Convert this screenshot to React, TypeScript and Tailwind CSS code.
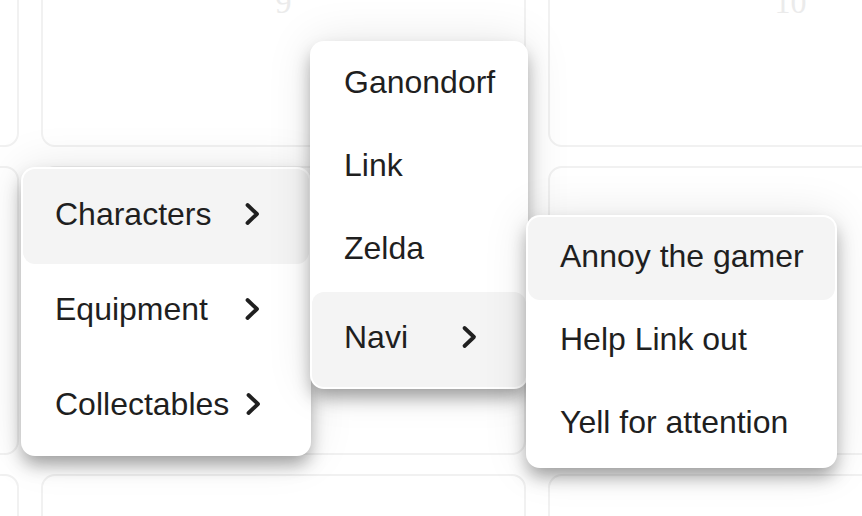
import React from "react";

type Item = { label: string; sub?: boolean; active?: boolean };

const Chevron = () => (
  <svg width="17" height="24" viewBox="0 0 17 24" fill="none" className="shrink-0">
    <polyline
      points="3.5,3 13,12 3.5,21"
      stroke="#1f1f1f"
      strokeWidth="3.8"
      strokeLinecap="round"
      strokeLinejoin="round"
    />
  </svg>
);

const Menu = ({ items, className }: { items: Item[]; className: string }) => (
  <div
    className={`absolute flex flex-col rounded-[14px] bg-white p-[2px] shadow-[0_10px_18px_-2px_rgba(0,0,0,0.36),0_0_46px_rgba(0,0,0,0.10)] ${className}`}
  >
    {items.map((item) => (
      <div
        key={item.label}
        className={`flex items-center whitespace-nowrap rounded-[12px] pb-[5px] pl-[32px] text-[32px] leading-none text-[#1f1f1f] ${
          item.sub ? "h-[95px] justify-between gap-4 pr-[48px]" : "h-[83px] pr-[33px]"
        } ${item.active ? "bg-[#f4f4f4]" : ""}`}
      >
        <span>{item.label}</span>
        {item.sub && <Chevron />}
      </div>
    ))}
  </div>
);

const days = ["", "9", "10", "", "", "", "", "", ""];

export default function App() {
  return (
    <div className="relative h-[516px] w-[862px] overflow-hidden bg-white font-['Liberation_Sans',Arial,sans-serif]">
      <div className="-ml-[466px] -mt-[20px] grid grid-cols-[485px_485px_485px] grid-rows-[167px_289px_289px] gap-x-[22px] gap-y-[19px]">
        {days.map((d, i) => (
          <div
            key={i}
            className="flex justify-center rounded-[14px] border-2 border-[#f1f1f1] pt-[4px]"
          >
            <span className="font-['Liberation_Serif',serif] text-[32px] leading-none text-[#ebebeb]">
              {d}
            </span>
          </div>
        ))}
      </div>

      <Menu
        className="left-[21px] top-[167px] w-[290px]"
        items={[
          { label: "Characters", sub: true, active: true },
          { label: "Equipment", sub: true },
          { label: "Collectables", sub: true },
        ]}
      />
      <Menu
        className="left-[310px] top-[41px] w-[218px]"
        items={[
          { label: "Ganondorf" },
          { label: "Link" },
          { label: "Zelda" },
          { label: "Navi", sub: true, active: true },
        ]}
      />
      <Menu
        className="left-[526px] top-[215px] w-[311px]"
        items={[
          { label: "Annoy the gamer", active: true },
          { label: "Help Link out" },
          { label: "Yell for attention" },
        ]}
      />
    </div>
  );
}
